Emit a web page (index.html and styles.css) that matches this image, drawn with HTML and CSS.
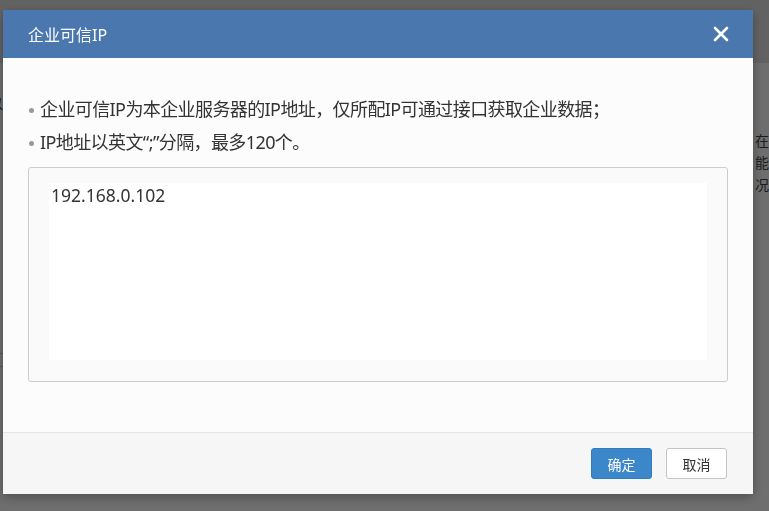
FILE: index.html
```html
<!DOCTYPE html>
<html lang="zh-CN">
<head>
    <meta charset="UTF-8">
    <meta name="viewport" content="width=device-width, initial-scale=1.0">
    <title>企业可信IP</title>
    <link rel="stylesheet" href="styles.css">
</head>
<body>
    <!-- Page behind the dialog -->
    <div class="page">
        <div class="page-header"></div>
        <div class="page-body">
            <div class="page-left">
                <p class="page-line">所以</p>
                <div class="page-rule"></div>
            </div>
            <div class="page-side">
                <p>在该企业</p>
                <p>能获取</p>
                <p>况。</p>
            </div>
        </div>
    </div>

    <!-- Dialog -->
    <div class="mask">
        <div class="dialog">
            <div class="dialog-header">
                <h2 class="dialog-title">企业可信IP</h2>
                <button class="dialog-close" aria-label="关闭">
                    <svg width="16" height="16" viewBox="0 0 16 16">
                        <path d="M2 2 L14 14 M14 2 L2 14" stroke="#fff" stroke-width="2.6" stroke-linecap="round"/>
                    </svg>
                </button>
            </div>
            <div class="dialog-body">
                <ul class="tips">
                    <li>企业可信IP为本企业服务器的IP地址，仅所配IP可通过接口获取企业数据；</li>
                    <li>IP地址以英文“;”分隔，最多120个。</li>
                </ul>
                <div class="ip-box">
                    <div class="ip-input">192.168.0.102</div>
                </div>
            </div>
            <div class="dialog-footer">
                <button class="btn btn-primary">确定</button>
                <button class="btn btn-default">取消</button>
            </div>
        </div>
    </div>
</body>
</html>
```

FILE: styles.css
```css
body {
    margin: 0;
    font-family: "Microsoft YaHei", "Noto Sans", "Noto Sans CJK SC", sans-serif;
    color: #333;
    background: #fff;
    overflow: hidden;
}
.page {
    height: 511px;
}
.page-header {
    height: 63px;
    background: #e4e4e4;
}
.page-body {
    display: flex;
}
.page-left {
    flex-shrink: 0;
    width: 40px;
    margin-left: -37px;
    padding-top: 30px;
}
.page-line {
    margin: 0;
    font-size: 14px;
    line-height: 22px;
    white-space: nowrap;
    text-align: right;
}
.page-rule {
    margin-top: 238px;
    height: 12px;
    border-top: 1px solid #ccc;
    border-bottom: 1px solid #ccc;
}
.page-side {
    flex-shrink: 0;
    margin-left: 752px;
    padding-top: 67px;
    font-size: 14px;
    line-height: 22px;
    color: #444;
    white-space: nowrap;
}
.page-side p {
    margin: 0;
}
.mask {
    position: fixed;
    inset: 0;
    background: rgba(0, 0, 0, 0.57);
}
.dialog {
    position: absolute;
    left: 3px;
    top: 10px;
    width: 750px;
    background: #fcfcfc;
    box-shadow: 0 3px 10px rgba(0, 0, 0, 0.3);
}
.dialog-header {
    height: 48px;
    display: flex;
    align-items: center;
    justify-content: space-between;
    padding: 0 24px 0 25px;
    background: #4a78ae;
}
.dialog-title {
    margin: 0;
    font-size: 16px;
    font-weight: normal;
    color: #fff;
}
.dialog-close {
    display: flex;
    padding: 0;
    border: none;
    background: none;
    cursor: pointer;
}
.dialog-body {
    padding: 35px 25px 50px;
}
.tips {
    margin: 0 0 8px;
    padding: 0;
    list-style: none;
}
.tips li {
    position: relative;
    padding-left: 12px;
    font-size: 18px;
    line-height: 33px;
    letter-spacing: -0.6px;
    color: #333;
    white-space: nowrap;
}
.tips li::before {
    content: "";
    position: absolute;
    left: 1px;
    top: 15px;
    width: 5px;
    height: 5px;
    border-radius: 50%;
    background: #999;
}
.ip-box {
    height: 177px;
    padding: 15px 20px 21px;
    border: 1px solid #ccc;
    border-radius: 3px;
    background: #fafafa;
}
.ip-input {
    height: 100%;
    padding: 1px 2px;
    box-sizing: border-box;
    background: #fff;
    font-size: 17.5px;
    line-height: 22px;
    color: #333;
}
.dialog-footer {
    display: flex;
    justify-content: flex-end;
    gap: 14px;
    padding: 15px 26px 15px;
    border-top: 1px solid #e5e5e5;
    background: #f6f6f6;
}
.btn {
    width: 61px;
    height: 31px;
    border-radius: 3px;
    font-family: inherit;
    font-size: 14px;
    cursor: pointer;
}
.btn-primary {
    color: #fff;
    background: #3b87c9;
    border: 1px solid #327cbd;
}
.btn-default {
    color: #333;
    background: #fff;
    border: 1px solid #c4c4c4;
}
```
